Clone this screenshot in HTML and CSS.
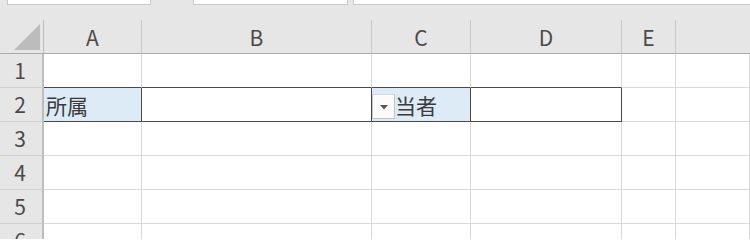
FILE: index.html
```html
<!DOCTYPE html>
<html lang="ja">
<head>
<meta charset="utf-8">
<link rel="stylesheet" href="styles.css">
</head>
<body>
<div class="app">
  <div class="topbar">
    <div class="box box1"></div>
    <div class="box box2"></div>
    <div class="box box3"></div>
  </div>
  <div class="sheet">
    <div class="hdr corner"><svg class="tri" width="26" height="26" viewBox="0 0 26 26"><polygon points="26,0 26,26 0,26" fill="#bcbcbc"/></svg></div>
    <div class="hdr col">A</div>
    <div class="hdr col">B</div>
    <div class="hdr col">C</div>
    <div class="hdr col">D</div>
    <div class="hdr col">E</div>
    <div class="hdr col last"></div>

    <div class="hdr rowh">1</div>
    <div class="cell above"></div>
    <div class="cell above"></div>
    <div class="cell above"></div>
    <div class="cell above"></div>
    <div class="cell"></div>
    <div class="cell"></div>

    <div class="hdr rowh">2</div>
    <div class="cell sel fill">所属</div>
    <div class="cell sel"></div>
    <div class="cell sel fill dd-host">担当者<div class="dd"><svg width="8" height="5" viewBox="0 0 8 5"><polygon points="0,0 8,0 4,4.5" fill="#555"/></svg></div></div>
    <div class="cell sel"></div>
    <div class="cell"></div>
    <div class="cell"></div>

    <div class="hdr rowh">3</div>
    <div class="cell"></div><div class="cell"></div><div class="cell"></div><div class="cell"></div><div class="cell"></div><div class="cell"></div>

    <div class="hdr rowh">4</div>
    <div class="cell"></div><div class="cell"></div><div class="cell"></div><div class="cell"></div><div class="cell"></div><div class="cell"></div>

    <div class="hdr rowh">5</div>
    <div class="cell"></div><div class="cell"></div><div class="cell"></div><div class="cell"></div><div class="cell"></div><div class="cell"></div>

    <div class="hdr rowh">6</div>
    <div class="cell"></div><div class="cell"></div><div class="cell"></div><div class="cell"></div><div class="cell"></div><div class="cell"></div>
  </div>
</div>
</body>
</html>
```
FILE: styles.css
```css
html, body {
  margin: 0;
  padding: 0;
  background: #ffffff;
}
.app {
  width: 750px;
  height: 239px;
  overflow: hidden;
  background: #e6e6e6;
  font-family: "Noto Sans CJK JP", "Noto Sans", sans-serif;
}
.topbar {
  height: 20px;
  display: flex;
  align-items: flex-start;
}
.box {
  height: 5px;
  background: #ffffff;
  border: 1px solid #c8c8c8;
  border-top: none;
  box-sizing: border-box;
}
.box1 { margin-left: 7px; width: 144px; }
.box2 { margin-left: 42px; width: 155px; }
.box3 { margin-left: 5px; flex: 1; border-right: none; }

.sheet {
  display: grid;
  grid-template-columns: 44px 98px 230px 99px 151px 54px 1fr;
  grid-template-rows: 34px repeat(6, 34px);
}
.hdr {
  background: #e6e6e6;
  color: #4a4a4a;
  font-size: 21px;
  display: flex;
  align-items: center;
  justify-content: center;
  box-sizing: border-box;
  line-height: 1;
}
.col {
  border-right: 1px solid #c8c8c8;
  border-bottom: 1px solid #ababab;
  padding-top: 1px;
}
.col.last { border-right: none; }
.corner {
  border-right: 1px solid #bdbdbd;
  border-bottom: 1px solid #ababab;
  justify-content: flex-end;
  align-items: flex-end;
  padding: 0 3px 3px 0;
}
.tri { display: block; }
.rowh {
  border-right: 2px solid #bdbdbd;
  border-bottom: 1px solid #d0d0d0;
  padding-right: 2px;
}
.cell {
  background: #ffffff;
  border-right: 1px solid #d9d9d9;
  border-bottom: 1px solid #d9d9d9;
  box-sizing: border-box;
  font-size: 21px;
  color: #3a3a3a;
  display: flex;
  align-items: center;
  padding-left: 2px;
  padding-top: 1px;
  white-space: nowrap;
  overflow: visible;
}
.cell.above { border-bottom-color: #4a4a4a; }
.cell.sel {
  border-right-color: #4a4a4a;
  border-bottom-color: #4a4a4a;
}
.cell.fill { background: #ddebf7; }
.dd-host { position: relative; }
.dd {
  position: absolute;
  left: 0;
  top: 6px;
  width: 23px;
  height: 25px;
  box-sizing: border-box;
  background: #fbfbfb;
  border: 1px solid #c4c4c4;
  border-top-color: #d8d8d8;
  display: flex;
  align-items: center;
  justify-content: center;
  padding-top: 2px;
}
.dd svg { display: block; }
```
